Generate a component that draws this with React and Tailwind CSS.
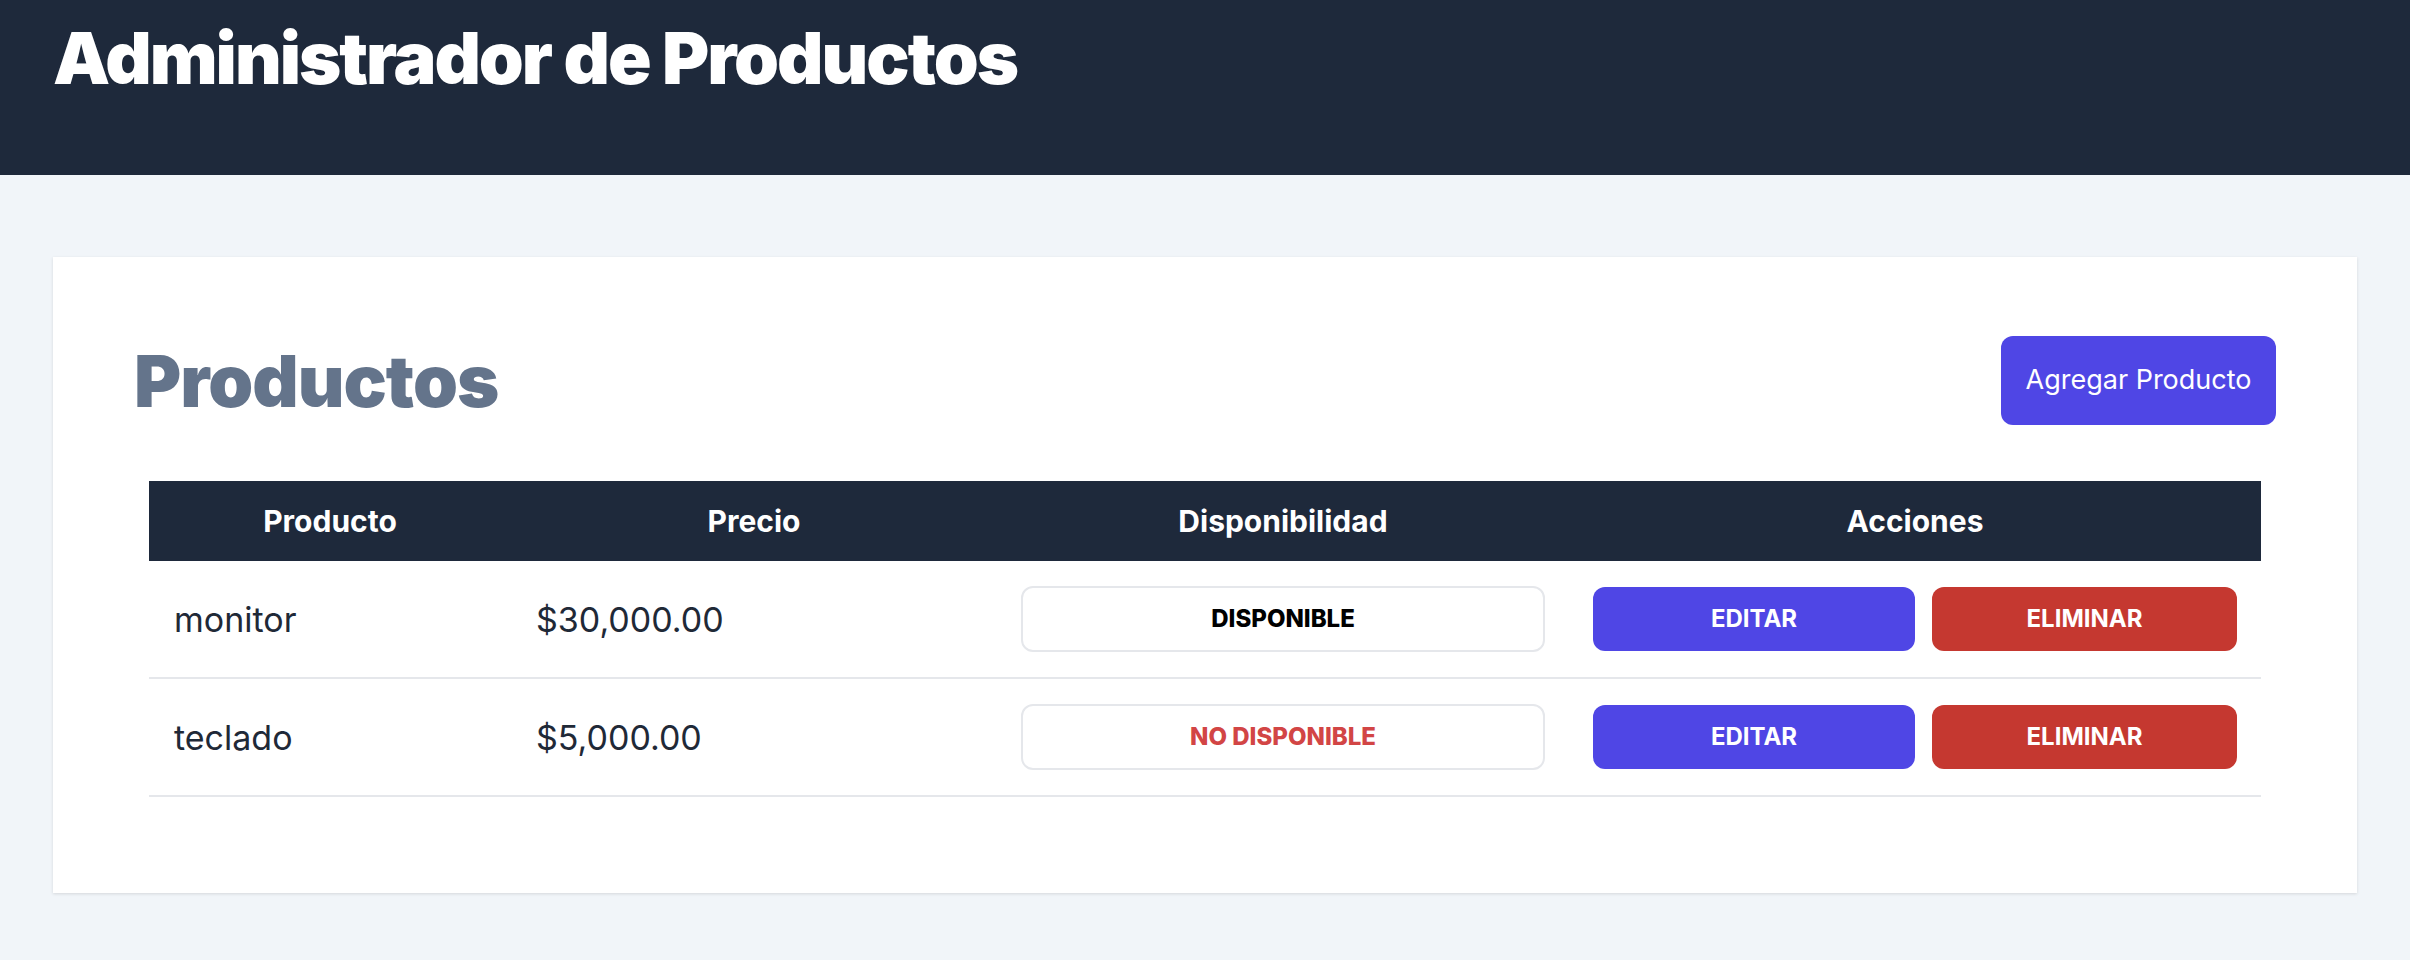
const products = [
  { id: 1, name: "monitor", price: 30000, available: true },
  { id: 2, name: "teclado", price: 5000, available: false },
];

function formatCurrency(amount) {
  return new Intl.NumberFormat("en-US", {
    style: "currency",
    currency: "USD",
  }).format(amount);
}

function ProductRow({ product }) {
  return (
    <tr className="border-b-2 border-[#e5e7eb]">
      <td className="px-[25px] py-[25px] align-middle text-[34px] text-[#1f2937]">
        {product.name}
      </td>
      <td className="px-[25px] py-[25px] align-middle text-[34px] text-[#1f2937]">
        {formatCurrency(product.price)}
      </td>
      <td className="px-[24px] py-[25px] align-middle">
        <button
          className={`flex h-[66px] w-full items-center justify-center rounded-[12px] border-2 border-[#e5e7eb] bg-white text-[24px] font-extrabold uppercase ${
            product.available ? "text-black" : "text-[#d24545]"
          }`}
        >
          {product.available ? "Disponible" : "No Disponible"}
        </button>
      </td>
      <td className="px-[24px] py-[25px] align-middle">
        <div className="flex items-center gap-[17px]">
          <button className="h-[64px] w-[322px] rounded-[12px] bg-[#4f46e5] text-[24px] font-bold uppercase text-white">
            Editar
          </button>
          <button className="h-[64px] flex-1 rounded-[12px] bg-[#c53830] text-[24px] font-bold uppercase text-white">
            Eliminar
          </button>
        </div>
      </td>
    </tr>
  );
}

export default function App() {
  return (
    <div className="min-h-screen bg-[#f1f5f9] font-['Inter',sans-serif]">
      <header className="h-[175px] bg-[#1e293b]">
        <div className="mx-auto max-w-[2304px] pt-[22px]">
          <h1 className="text-[72px] font-black leading-none tracking-[-2px] text-white">
            Administrador de Productos
          </h1>
        </div>
      </header>

      <main className="mx-auto mt-[82px] max-w-[2304px] bg-white px-[81px] pb-[81px] pt-[79px] shadow-[0_1px_3px_rgba(0,0,0,0.12)]">
        <div className="flex items-center justify-between">
          <h2 className="text-[72px] font-black leading-none tracking-[-1px] text-[#64748b]">
            Productos
          </h2>
          <button className="h-[89px] w-[275px] rounded-[12px] bg-[#4f46e5] text-[27px] text-white">
            Agregar Producto
          </button>
        </div>

        <div className="mt-[41px] p-[15px]">
          <table className="w-full table-fixed border-collapse">
            <thead>
              <tr className="bg-[#1e293b] text-[30px] font-bold text-white">
                <th className="h-[80px] w-[362px]">Producto</th>
                <th className="h-[80px] w-[486px]">Precio</th>
                <th className="h-[80px] w-[572px]">Disponibilidad</th>
                <th className="h-[80px]">Acciones</th>
              </tr>
            </thead>
            <tbody>
              {products.map((product) => (
                <ProductRow key={product.id} product={product} />
              ))}
            </tbody>
          </table>
        </div>
      </main>
    </div>
  );
}
